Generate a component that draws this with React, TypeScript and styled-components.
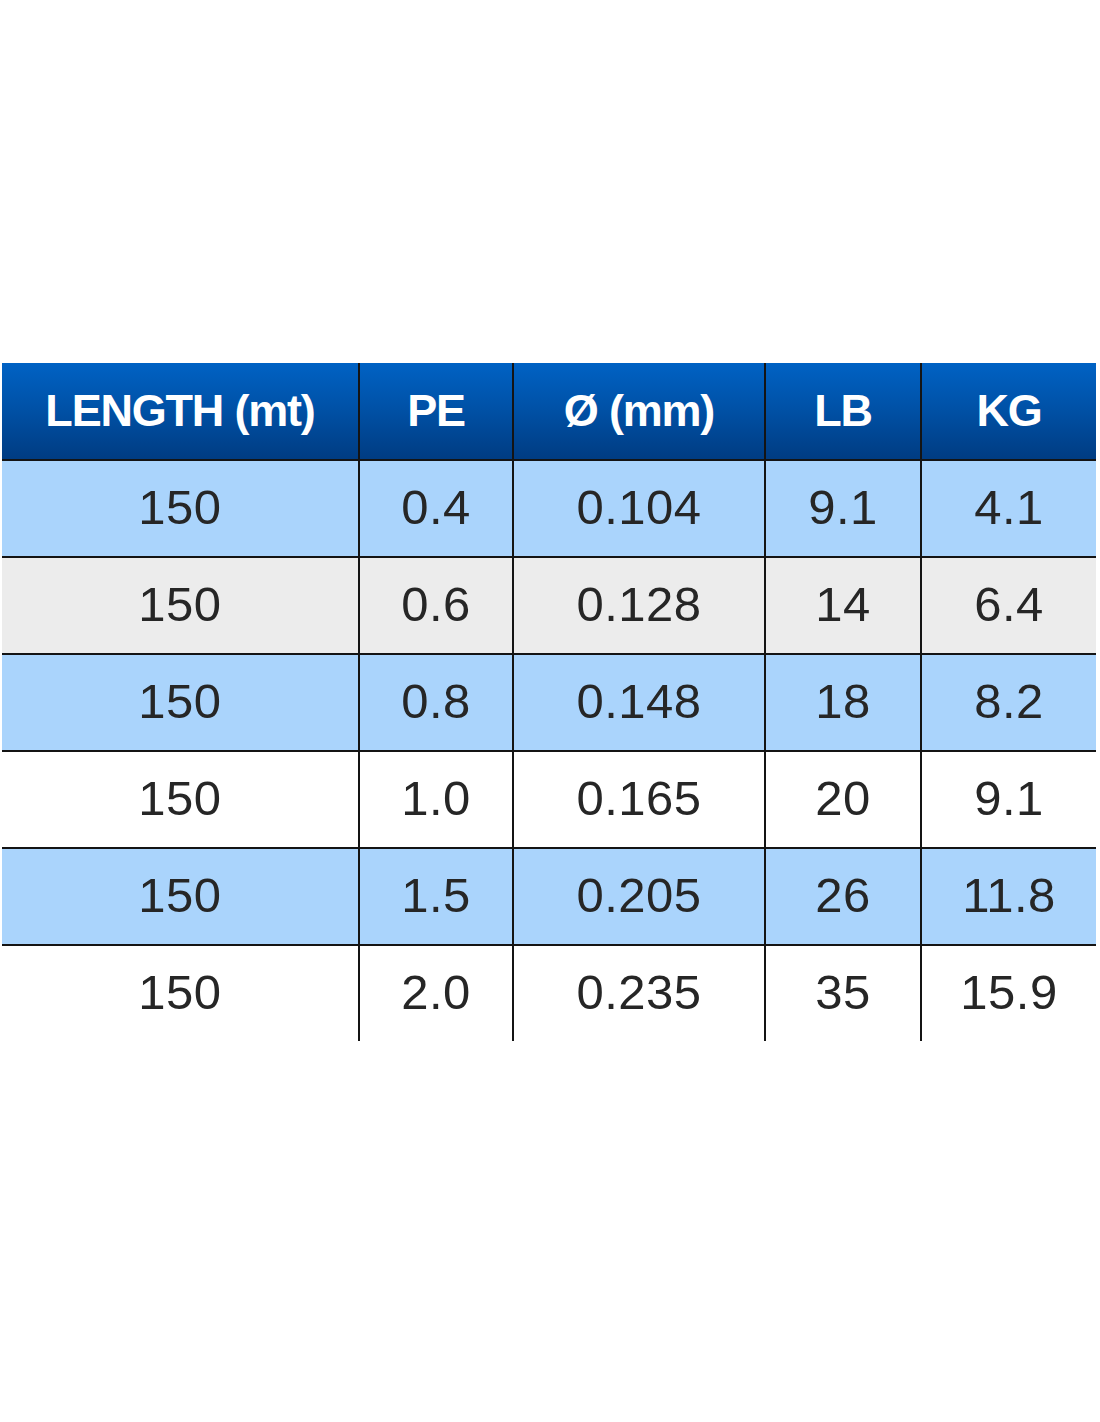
import { FC } from 'react';
import styled, { createGlobalStyle } from 'styled-components';

const GlobalStyle = createGlobalStyle`
  html, body {
    margin: 0;
    padding: 0;
    background: #ffffff;
  }
`;

const Page = styled.div`
  width: 1100px;
  min-height: 1422px;
  padding: 363px 4px 0 2px;
  box-sizing: border-box;
  font-family: 'Liberation Sans', Arial, sans-serif;
`;

const Table = styled.div`
  width: 1094px;
  display: flex;
  flex-direction: column;
`;

type Tone = 'head' | 'blue' | 'gray' | 'white';

const bg: Record<Tone, string> = {
  head: 'linear-gradient(180deg, #0062c4 0%, #0052a8 45%, #003c82 100%)',
  blue: '#aad4fc',
  gray: '#ececec',
  white: '#ffffff',
};

const Row = styled.div<{ $tone: Tone }>`
  display: grid;
  grid-template-columns: 356px 154px 252px 156px 176px;
  height: ${({ $tone }) => ($tone === 'head' ? '96px' : '95px')};
  background: ${({ $tone }) => bg[$tone]};
  & + & {
    border-top: 2px solid #141414;
  }
`;

const Cell = styled.div<{ $head?: boolean }>`
  display: flex;
  align-items: center;
  justify-content: center;
  & + & {
    border-left: 2px solid #141414;
  }
  color: ${({ $head }) => ($head ? '#ffffff' : '#262626')};
  font-size: ${({ $head }) => ($head ? '45px' : '49px')};
  font-weight: ${({ $head }) => ($head ? 700 : 400)};
  letter-spacing: ${({ $head }) => ($head ? '-1.2px' : '0.5px')};
  padding-bottom: ${({ $head }) => ($head ? '0' : '4px')};
`;

const headers = ['LENGTH (mt)', 'PE', 'Ø (mm)', 'LB', 'KG'];

const rows: { tone: Tone; values: string[] }[] = [
  { tone: 'blue', values: ['150', '0.4', '0.104', '9.1', '4.1'] },
  { tone: 'gray', values: ['150', '0.6', '0.128', '14', '6.4'] },
  { tone: 'blue', values: ['150', '0.8', '0.148', '18', '8.2'] },
  { tone: 'white', values: ['150', '1.0', '0.165', '20', '9.1'] },
  { tone: 'blue', values: ['150', '1.5', '0.205', '26', '11.8'] },
  { tone: 'white', values: ['150', '2.0', '0.235', '35', '15.9'] },
];

const App: FC = () => (
  <Page>
    <GlobalStyle />
    <Table>
      <Row $tone="head">
        {headers.map((h) => (
          <Cell key={h} $head>
            {h}
          </Cell>
        ))}
      </Row>
      {rows.map((r, i) => (
        <Row key={i} $tone={r.tone}>
          {r.values.map((v, j) => (
            <Cell key={j}>{v}</Cell>
          ))}
        </Row>
      ))}
    </Table>
  </Page>
);

export default App;
